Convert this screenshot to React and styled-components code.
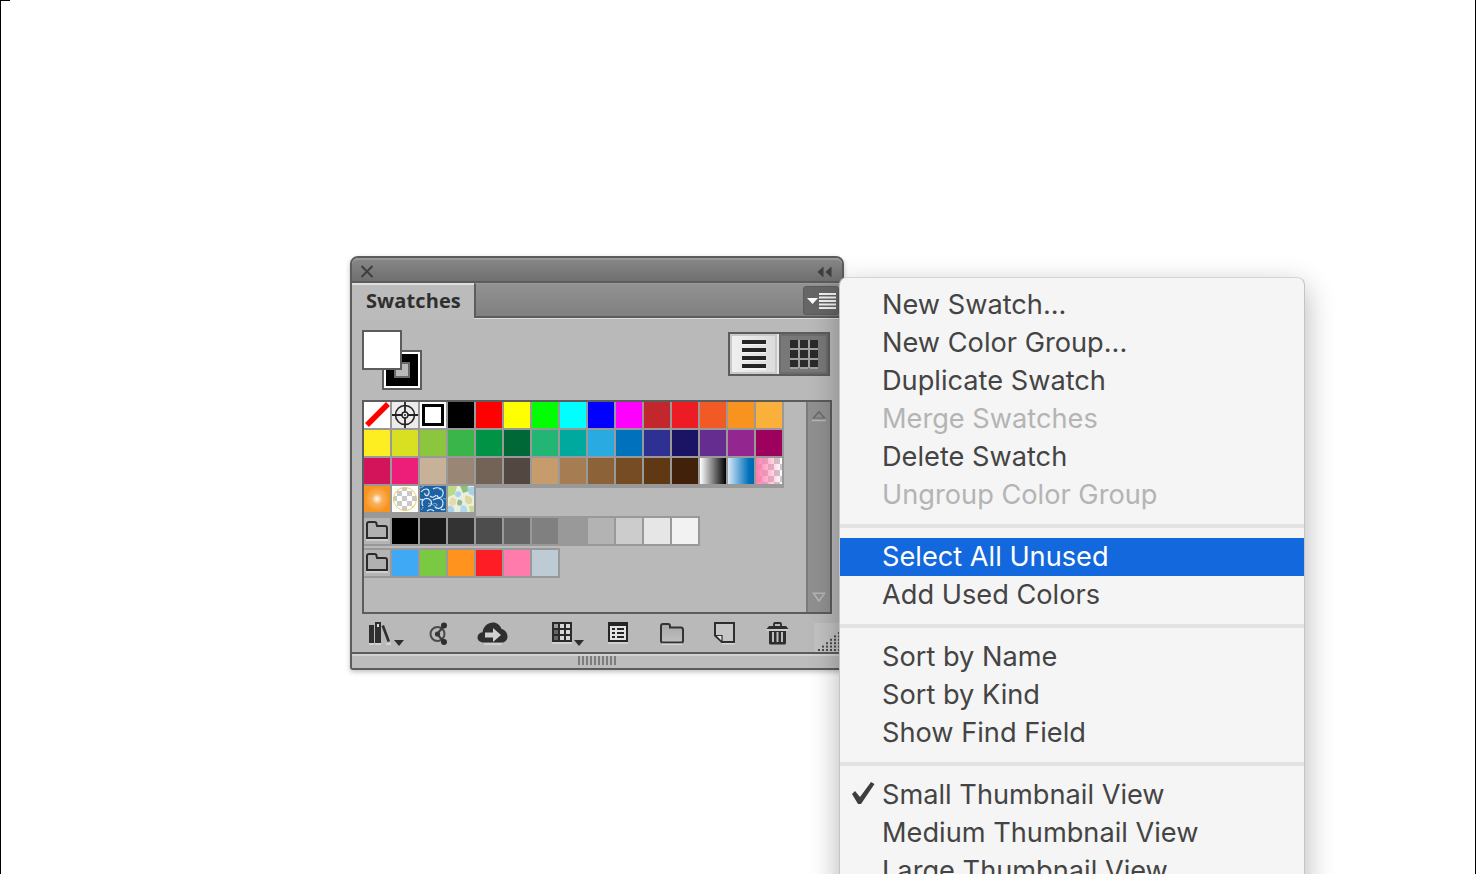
import React from 'react';
import styled, { createGlobalStyle } from 'styled-components';

const GlobalStyle = createGlobalStyle`
  html, body {
    margin: 0;
    padding: 0;
    background: #fff;
    overflow: hidden;
  }
  * {
    box-sizing: border-box;
  }
`;

const Page = styled.div`
  position: relative;
  width: 1476px;
  height: 874px;
  overflow: hidden;
  background: #fff;
  border-left: 1px solid #000;
  border-right: 1px solid #000;
  &::before {
    content: '';
    position: absolute;
    left: 0;
    top: 0;
    width: 9px;
    height: 1px;
    background: #000;
  }
`;

const PanelWindow = styled.div`
  position: absolute;
  left: 349px;
  top: 256px;
  width: 494px;
  height: 414px;
  display: flex;
  flex-direction: column;
  border: 2px solid #5c5c5c;
  border-radius: 8px 8px 3px 3px;
  background: #b9b9b9;
  box-shadow: 0 2px 5px rgba(0, 0, 0, 0.25);
`;

const TitleBar = styled.div`
  height: 25px;
  flex: none;
  display: flex;
  align-items: center;
  justify-content: space-between;
  padding: 2px 10px 0 8px;
  border-radius: 6px 6px 0 0;
  border-top: 2px solid #989898;
  border-bottom: 2px solid #5c5c5c;
  background: linear-gradient(#868686, #6f6f6f);
`;

const TabRow = styled.div`
  height: 36px;
  flex: none;
  display: flex;
  background: linear-gradient(#929292, #7f7f7f);
  border-bottom: 1px solid #ddd;
`;

const Tab = styled.div`
  width: 122px;
  display: flex;
  align-items: center;
  padding: 0 0 2px 14px;
  background: #bbb;
  border-top: 2px solid #dedede;
  font: 700 20px/1 'Open Sans', sans-serif;
  letter-spacing: 0.1px;
  color: #2f2f2f;
  margin-bottom: -1px;
  z-index: 1;
`;

const TabFill = styled.div`
  flex: 1;
  display: flex;
  justify-content: flex-end;
  padding: 2px 3px 0 0;
  border-left: 2px solid #5c5c5c;
  border-top: 1px solid #9b9b9b;
  border-bottom: 2px solid #5c5c5c;
`;

const MenuButton = styled.div`
  width: 36px;
  height: 29px;
  display: flex;
  align-items: center;
  justify-content: center;
  gap: 1px;
  border-radius: 3px;
  background: #666;
  border: 1px solid #5a5a5a;
`;

const PanelBody = styled.div`
  flex: 1;
  display: flex;
  flex-direction: column;
  padding: 11px 9px 0 10px;
  background: #b9b9b9;
`;

const TopControls = styled.div`
  height: 60px;
  width: 468px;
  flex: none;
  display: flex;
  justify-content: space-between;
`;

const ColorPair = styled.div`
  position: relative;
  width: 60px;
  height: 60px;
`;

const FillChip = styled.div`
  position: absolute;
  left: 0;
  top: 0;
  width: 40px;
  height: 40px;
  background: #fff;
  border: 2px solid #5c5c5c;
`;

const StrokeChip = styled.div`
  position: absolute;
  right: 0;
  bottom: 0;
  width: 40px;
  height: 40px;
  padding: 4px;
  background: #000;
  border: 2px solid #5c5c5c;
  box-shadow: inset 0 0 0 2px #fff;
  &::after {
    content: '';
    display: block;
    margin: 6px;
    width: 12px;
    height: 12px;
    box-sizing: content-box;
    border: 2px solid #6a6a6a;
    background: #b9b9b9;
  }
`;

const ViewToggle = styled.div`
  width: 102px;
  height: 44px;
  margin-top: 2px;
  display: flex;
  border: 2px solid #5c5c5c;
  background: #e8e8e8;
`;

const ViewButton = styled.div`
  width: ${(p) => (p.$active ? 48 : 50)}px;
  display: flex;
  align-items: center;
  justify-content: center;
  margin-right: ${(p) => (p.$active ? 2 : 0)}px;
  padding-top: 2px;
  background: ${(p) =>
    p.$active ? 'linear-gradient(90deg,#f0f0f0,#dcdcdc)' : '#787878'};
  border: ${(p) => (p.$active ? '2px solid #c9c9c9' : '2px solid #6c6c6c')};
`;

const ListBox = styled.div`
  height: 214px;
  flex: none;
  margin-top: 10px;
  width: 470px;
  display: flex;
  border: 2px solid #5c5c5c;
  background: #b9b9b9;
`;

const SwatchArea = styled.div`
  flex: 1;
  display: flex;
  flex-direction: column;
  align-items: flex-start;
`;

const SwatchGrid = styled.div`
  display: flex;
  flex-wrap: wrap;
  width: 420px;
  background: linear-gradient(#999, #999) 0 0 / 420px 86px no-repeat,
    linear-gradient(#999, #999) 0 84px / 112px 30px no-repeat;
  height: 114px;
  align-content: flex-start;
`;

const Swatch = styled.div`
  width: 26px;
  height: 26px;
  margin: 0 2px 2px 0;
  flex: none;
  overflow: hidden;
  background: ${(p) => p.$color};
`;

const GroupRow = styled.div`
  display: flex;
  height: 30px;
  padding: 2px 0;
  margin-bottom: 2px;
  background: #999;
`;

const GroupCell = styled(Swatch)`
  margin: 0 2px 0 0;
`;

const FolderCell = styled(GroupCell)`
  background: #b4b4b4;
  display: flex;
  align-items: center;
  justify-content: center;
`;

const Scrollbar = styled.div`
  width: 24px;
  flex: none;
  display: flex;
  flex-direction: column;
  justify-content: space-between;
  align-items: center;
  padding: 8px 0 8px;
  background: #909090;
  border-left: 2px solid #7b7b7b;
`;

const Footer = styled.div`
  height: 38px;
  flex: none;
  display: flex;
  align-items: flex-start;
  padding: 8px 0 0 7px;
  margin-right: -9px;
`;

const Tool = styled.div`
  flex: none;
  display: flex;
  margin-left: ${(p) => p.$gap || 0}px;
`;

const ToolCaret = styled.svg`
  margin: 18px 0 0 2px;
`;

const ResizeGrip = styled.div`
  margin-left: auto;
  margin-top: 1px;
  width: 28px;
  height: 29px;
  background: #c2c2c2;
`;

const BottomBar = styled.div`
  height: 16px;
  flex: none;
  display: flex;
  align-items: center;
  justify-content: center;
  padding: 0 0 2px 2px;
  border-top: 2px solid #5c5c5c;
  background: linear-gradient(#d2d2d2 2px, #bdbdbd 2px);
`;

const Menu = styled.div`
  position: absolute;
  left: 838px;
  top: 277px;
  width: 466px;
  height: 640px;
  padding-top: 8px;
  background: #f5f5f5;
  border-radius: 8px 8px 0 0;
  border: 1px solid #c4c4c4;
  border-top-color: #d4d4d4;
  box-shadow: 0 10px 30px rgba(0, 0, 0, 0.3);
  font-family: Inter, 'Noto Sans', sans-serif;
`;

const MenuItem = styled.div`
  position: relative;
  height: 38px;
  padding: 0 0 0 42px;
  display: flex;
  align-items: center;
  font-size: 27.2px;
  line-height: 36px;
  white-space: nowrap;
  color: ${(p) =>
    p.$active ? '#fff' : p.$disabled ? '#b4b4b4' : '#444'};
  background: ${(p) => (p.$active ? '#1268dc' : 'transparent')};
`;

const MenuSeparator = styled.div`
  height: 4px;
  margin: 10px 0;
  background: #e3e3e3;
`;

const CheckMark = styled.svg`
  position: absolute;
  left: 11px;
  top: 6px;
`;

const FrameMark = styled.div`
  width: 26px;
  height: 26px;
  background: #fff;
  padding: 2px;
  & > div {
    width: 22px;
    height: 22px;
    border: 3px solid #000;
    background: #fff;
  }
`;

const Close = () => (
  <svg width="14" height="13" viewBox="0 0 14 13">
    <path d="M1.5 1 12.5 12M12.5 1 1.5 12" stroke="#3e3e3e" strokeWidth="2" />
  </svg>
);

const Collapse = () => (
  <svg width="15" height="12" viewBox="0 0 15 12">
    <path d="M6.5 0.5V11.5L0.5 6ZM14.5 0.5V11.5L8.5 6Z" fill="#3e3e3e" />
  </svg>
);

const PanelMenuIcon = () => (
  <>
    <svg width="11" height="6" viewBox="0 0 11 6">
      <path d="M0 0H11L5.5 6Z" fill="#fff" />
    </svg>
    <svg width="17" height="16" viewBox="0 0 17 16">
      <path
        d="M0 1H17M0 4.5H17M0 8H17M0 11.5H17M0 15H17"
        stroke="#f2f2f2"
        strokeWidth="2"
      />
    </svg>
  </>
);

const ListIcon = () => (
  <svg width="24" height="30" viewBox="0 0 24 30">
    <path d="M0 0h24v4H0zM0 8h24v4H0zM0 16h24v4H0zM0 24h24v4H0z" fill="#262626" />
    <path d="M0 4h24v1H0zM0 12h24v1H0zM0 20h24v1H0zM0 28h24v2H0z" fill="#fff" opacity=".6" />
  </svg>
);

const GridIcon = () => (
  <svg width="28" height="30" viewBox="0 0 28 30">
    <rect width="28" height="28" fill="#a0a0a0" />
    <path
      d="M0 0h8v8H0zM10 0h8v8h-8zM20 0h8v8h-8zM0 10h8v8H0zM10 10h8v8h-8zM20 10h8v8h-8zM0 20h8v8H0zM10 20h8v8h-8zM20 20h8v8h-8z"
      fill="#2a2a2a"
    />
    <path d="M0 28h8M10 28h8M20 28h8" stroke="#a0a0a0" strokeWidth="2" />
  </svg>
);

const RegistrationMark = () => (
  <svg width="26" height="26" viewBox="0 0 26 26">
    <rect width="26" height="26" fill="#ececec" />
    <circle cx="13" cy="13" r="9.5" fill="none" stroke="#222" strokeWidth="1.6" />
    <path d="M13 0v26M0 13h26" stroke="#222" strokeWidth="1.8" />
    <circle cx="13" cy="13" r="3" fill="#ececec" stroke="#222" strokeWidth="1.4" />
    <circle cx="13" cy="13" r="1" fill="#222" />
  </svg>
);

const NoneMark = () => (
  <svg width="26" height="26" viewBox="0 0 26 26">
    <rect width="26" height="26" fill="#fff" />
    <path d="M3 23 24 2" stroke="#f00" strokeWidth="5.5" />
  </svg>
);

const checker = (a, b, s) =>
  `repeating-conic-gradient(${a} 0 25%, ${b} 0 50%) 0 0 / ${s}px ${s}px`;

const CircleChecker = () => (
  <svg width="26" height="26" viewBox="0 0 26 26">
    <defs>
      <pattern id="chk" width="10" height="10" patternUnits="userSpaceOnUse">
        <rect width="10" height="10" fill="#fff" />
        <rect width="5" height="5" fill="#c8c8c8" />
        <rect x="5" y="5" width="5" height="5" fill="#c8c8c8" />
      </pattern>
    </defs>
    <rect width="26" height="26" fill="#fff" />
    <circle cx="13" cy="13" r="11.5" fill="url(#chk)" stroke="#e8cf55" strokeWidth="1" />
  </svg>
);

const BlueSwirl = () => (
  <svg width="26" height="26" viewBox="0 0 26 26">
    <rect width="26" height="26" fill="#1d62a3" />
    <g fill="none" stroke="#dbe9f4" strokeWidth="1.2">
      <path d="M1 6c4-5 9-3 8 1s-5 3-4 0M13 3c5-3 11 0 10 5s-6 4-6 1" />
      <path d="M3 20c-3-5 2-9 6-7s3 8-1 7M13 14c4-3 10-2 10 3s-5 7-8 4" />
      <path d="M10 10c2 2 5 1 6-1M7 25c2-2 5-2 7 0M21 23c1 1 3 1 4 0M0 13c1 1 2 1 3 0" />
    </g>
    <g fill="none" stroke="#8fbbdc" strokeWidth="1">
      <path d="M12 19c2-2 5-2 5 0s-3 2-3 0M0 2c1-1 3-1 4-2M23 12c1 1 2 1 3 1M1 24c1-1 2-2 2-3M19 3c1 1 2 1 3 0M8 17c1 1 2 1 3 0" />
    </g>
  </svg>
);

const PastelBlobs = () => (
  <svg width="26" height="26" viewBox="0 0 26 26">
    <rect width="26" height="26" fill="#e9efdc" />
    <path d="M0 0h9l-2 8-7 3z" fill="#bcd98a" />
    <path d="M12 0h8l1 5-6 2z" fill="#8fbf7a" />
    <path d="M19 1h7v9l-5-2z" fill="#a5d4ea" />
    <path d="M8 6c3-2 6 0 5 3s-5 3-6 0z" fill="#a9d3ea" />
    <path d="M17 10c4-1 8 2 7 6s-6 2-7-1z" fill="#dfd7a0" />
    <path d="M3 12c4-1 6 2 5 5s-6 4-7 0z" fill="#e3dba8" />
    <path d="M10 14c3-1 5 1 4 4s-5 2-5-1z" fill="#93b79a" />
    <path d="M0 20c4-1 7 1 6 6H0z" fill="#a9d3ea" />
    <path d="M13 20c3-2 7 0 6 6h-7z" fill="#b2d8ec" />
    <path d="M21 20h5v6h-4z" fill="#cbdc9a" />
  </svg>
);

const specials = {
  none: <NoneMark />,
  registration: <RegistrationMark />,
  circle: <CircleChecker />,
  blue: <BlueSwirl />,
  pastel: <PastelBlobs />,
};

const mainSwatches = [
  { kind: 'none' },
  { kind: 'registration' },
  { frame: true },
  '#000000', '#ff0000', '#ffff00', '#00ff00', '#00ffff', '#0000ff', '#ff00ff',
  '#c1272d', '#ed1c24', '#f15a24', '#f7931e', '#fbb03b',
  '#fcee21', '#d9e021', '#8cc63f', '#39b54a', '#009245', '#006837', '#22b573',
  '#00a99d', '#29abe2', '#0071bc', '#2e3192', '#1b1464', '#662d91', '#93278f', '#9e005d',
  '#d4145a', '#ed1e79', '#c7b299', '#998675', '#736357', '#534741', '#c69c6d',
  '#a67c52', '#8c6239', '#754c24', '#603813', '#42210b',
  { color: 'linear-gradient(90deg,#fff,#000)' },
  { color: 'linear-gradient(90deg,#d6e8f7,#0071bc 80%,#0067ac)' },
  { color: `linear-gradient(90deg,#ff7bac,rgba(255,123,172,0)), ${checker('#c9c9c9', '#fff', 12)}` },
  { color: 'radial-gradient(circle,#fff 0,#fbb15a 28%,#f7931e 70%)' },
  { kind: 'circle' },
  { kind: 'blue' },
  { kind: 'pastel' },
];

const grayGroup = ['#000000', '#1a1a1a', '#333333', '#4d4d4d', '#666666', '#808080', '#999999', '#b3b3b3', '#cccccc', '#e6e6e6', '#f2f2f2'];
const brightGroup = ['#3fa9f5', '#7ac943', '#ff931e', '#ff1d25', '#ff7bac', '#bdccd4'];

const FolderIcon = () => (
  <svg width="22" height="20" viewBox="0 0 22 20">
    <path
      d="M1 17V3Q1 1 3 1H8.5Q10.5 1 10.5 3L11 5H19Q21 5 21 7V17Z"
      fill="#b0b0b0"
      stroke="#2b2b2b"
      strokeWidth="2"
    />
    <path d="M0 19h22" stroke="#d6d6d6" strokeWidth="1.6" />
  </svg>
);

const Arrow = ({ down }) => (
  <svg width="16" height="12" viewBox="0 0 16 12">
    {down ? (
      <path d="M1 0.5H15L8 10.5ZM4 2 8 7.5 12 2Z" fill="#b5b5b5" fillRule="evenodd" />
    ) : (
      <>
        <path d="M8 0.5 15 8.5H1ZM8 3 4 7.5H12Z" fill="#6b6b6b" fillRule="evenodd" />
        <path d="M1 10.5H15" stroke="#b5b5b5" strokeWidth="1.5" />
      </>
    )}
  </svg>
);

const Caret = () => (
  <ToolCaret width="10" height="6" viewBox="0 0 10 6">
    <path d="M0 0H10L5 6Z" fill="#2e2e2e" />
  </ToolCaret>
);

const LibraryIcon = () => (
  <svg width="23" height="23" viewBox="0 0 23 23">
    <path d="M0 3h5v18H0zM6 0h6v21H6z" fill="#2f2f2f" />
    <path d="M8 2h2v3H8z" fill="#ddd" />
    <path d="M12.5 4 18.5 20 21 19 15 3Z" fill="#2f2f2f" />
    <path d="M0 22h5M6 22h6M17 22h5" stroke="#dadada" strokeWidth="1.4" />
  </svg>
);

const LinkIcon = () => (
  <svg width="20" height="24" viewBox="0 0 20 24">
    <circle cx="8.5" cy="12" r="7" fill="none" stroke="#4a4a4a" strokeWidth="2" />
    <circle cx="8.5" cy="12" r="2.6" fill="#333" />
    <path d="M8 12 15 4M8 12 15 20" stroke="#3a3a3a" strokeWidth="2" />
    <circle cx="15" cy="3.5" r="3" fill="#2e2e2e" />
    <circle cx="15" cy="20" r="3" fill="#2e2e2e" />
  </svg>
);

const CloudIcon = () => (
  <svg width="31" height="23" viewBox="0 0 31 23">
    <path
      d="M7 20.5C2.5 20.5 0.5 18 0.5 15.5C0.5 12.5 2.5 10.5 5.5 10.2C6.5 4 11 0.5 16 0.5C20 0.5 23 3 24.5 7C28 7.5 30.5 11 30.5 14.5C30.5 18 28 20.5 25 20.5Z"
      fill="#2f2f2f"
    />
    <path d="M8 10.5h8V6l8 7-8 7v-4.5H8z" fill="#d0d0d0" />
    <path d="M7 22h18" stroke="#d8d8d8" strokeWidth="1.4" />
  </svg>
);

const SwatchGridIcon = () => (
  <svg width="20" height="22" viewBox="0 0 20 22">
    <rect width="20" height="20" fill="#2a2a2a" />
    <path d="M8 2h4v4H8zM14 2h4v4h-4zM8 8h4v4H8zM14 8h4v4h-4zM14 14h4v4h-4zM8 14h4v4H8z" fill="#d8d8d8" />
    <path d="M2 2h4v4H2z" fill="#9a9a9a" />
    <path d="M2 8h4v4H2zM2 14h4v4H2z" fill="#666" />
    <path d="M0 21h20" stroke="#dadada" strokeWidth="1.4" />
  </svg>
);

const GroupIcon = () => (
  <svg width="20" height="22" viewBox="0 0 20 22">
    <rect width="20" height="20" fill="#262626" />
    <path d="M2 4h16v14H2z" fill="#e4e4e4" />
    <path d="M4 6h3v2H4zM9 6h7v2H9zM4 10h3v2H4zM9 10h7v2H9zM4 14h3v2H4zM9 14h7v2H9z" fill="#262626" />
    <path d="M0 21h20" stroke="#dadada" strokeWidth="1.4" />
  </svg>
);

const NewFolderIcon = () => (
  <svg width="24" height="23" viewBox="0 0 24 23">
    <defs>
      <linearGradient id="folderFill" x1="0" y1="0" x2="0" y2="1">
        <stop offset="0" stopColor="#a8a8a8" />
        <stop offset="1" stopColor="#c0c0c0" />
      </linearGradient>
    </defs>
    <path
      d="M1 19V4Q1 2 3 2H8Q10 2 10 4V5.5H21Q23 5.5 23 8V19Q23 20.5 21 20.5H3Q1 20.5 1 19Z"
      fill="url(#folderFill)"
      stroke="#333"
      strokeWidth="2"
    />
    <path d="M2 22.3h20" stroke="#d8d8d8" strokeWidth="1.4" />
  </svg>
);

const NewSwatchIcon = () => (
  <svg width="21" height="23" viewBox="0 0 21 23">
    <path d="M1 1H20V20H8L1 13.5Z" fill="#c6c6c6" stroke="#2e2e2e" strokeWidth="2" />
    <path d="M1.5 13.5H8V20Z" fill="#ececec" stroke="#2e2e2e" strokeWidth="1.2" />
    <path d="M8 21.7h13" stroke="#dadada" strokeWidth="1.3" />
  </svg>
);

const TrashIcon = () => (
  <svg width="23" height="24" viewBox="0 0 23 24">
    <path d="M8 4V2Q8 1 9 1H14Q15 1 15 2V4" fill="none" stroke="#2e2e2e" strokeWidth="1.8" />
    <path d="M0.5 7 3 4H20L22.5 7Z" fill="#2e2e2e" />
    <path d="M3 9H20V21Q20 22.5 18.5 22.5H4.5Q3 22.5 3 21Z" fill="#2e2e2e" />
    <path d="M6 10h2v10H6zM10.5 10h2v10h-2zM15 10h2v10h-2z" fill="#bdbdbd" />
    <path d="M0.5 8h22" stroke="#d8d8d8" strokeWidth="1.2" />
  </svg>
);

const GripDots = () => (
  <svg width="28" height="29" viewBox="0 0 28 29">
    <g fill="#4a4a4a">
      {[...Array(6)].map((_, row) =>
        [...Array(row + 1)].map((_, col) => (
          <rect key={`${row}-${col}`} x={24 - col * 4} y={9 + row * 3.4} width="2" height="2" />
        ))
      )}
    </g>
  </svg>
);

const GripLines = () => (
  <svg width="40" height="9" viewBox="0 0 40 9">
    <path
      d="M1 0v9M5 0v9M9 0v9M13 0v9M17 0v9M21 0v9M25 0v9M29 0v9M33 0v9M37 0v9"
      stroke="#7d7d7d"
      strokeWidth="2"
    />
  </svg>
);

const menuItems = [
  { label: 'New Swatch...' },
  { label: 'New Color Group...' },
  { label: 'Duplicate Swatch' },
  { label: 'Merge Swatches', disabled: true },
  { label: 'Delete Swatch' },
  { label: 'Ungroup Color Group', disabled: true },
  { separator: true },
  { label: 'Select All Unused', active: true },
  { label: 'Add Used Colors' },
  { separator: true },
  { label: 'Sort by Name' },
  { label: 'Sort by Kind' },
  { label: 'Show Find Field' },
  { separator: true },
  { label: 'Small Thumbnail View', checked: true },
  { label: 'Medium Thumbnail View' },
  { label: 'Large Thumbnail View' },
];

function renderSwatch(item, i) {
  if (typeof item === 'string') return <Swatch key={i} $color={item} />;
  if (item.frame) {
    return (
      <Swatch key={i}>
        <FrameMark>
          <div />
        </FrameMark>
      </Swatch>
    );
  }
  if (item.kind) return <Swatch key={i}>{specials[item.kind]}</Swatch>;
  return <Swatch key={i} $color={item.color} />;
}

export default function App() {
  return (
    <Page>
      <GlobalStyle />
      <PanelWindow>
        <TitleBar>
          <Close />
          <Collapse />
        </TitleBar>
        <TabRow>
          <Tab>Swatches</Tab>
          <TabFill>
            <MenuButton>
              <PanelMenuIcon />
            </MenuButton>
          </TabFill>
        </TabRow>
        <PanelBody>
          <TopControls>
            <ColorPair>
              <StrokeChip />
              <FillChip />
            </ColorPair>
            <ViewToggle>
              <ViewButton $active>
                <ListIcon />
              </ViewButton>
              <ViewButton>
                <GridIcon />
              </ViewButton>
            </ViewToggle>
          </TopControls>
          <ListBox>
            <SwatchArea>
              <SwatchGrid>{mainSwatches.map(renderSwatch)}</SwatchGrid>
              <GroupRow>
                <FolderCell>
                  <FolderIcon />
                </FolderCell>
                {grayGroup.map((c) => (
                  <GroupCell key={c} $color={c} />
                ))}
              </GroupRow>
              <GroupRow>
                <FolderCell>
                  <FolderIcon />
                </FolderCell>
                {brightGroup.map((c) => (
                  <GroupCell key={c} $color={c} />
                ))}
              </GroupRow>
            </SwatchArea>
            <Scrollbar>
              <Arrow />
              <Arrow down />
            </Scrollbar>
          </ListBox>
          <Footer>
            <Tool>
              <LibraryIcon />
              <Caret />
            </Tool>
            <Tool $gap={25}>
              <LinkIcon />
            </Tool>
            <Tool $gap={28}>
              <CloudIcon />
            </Tool>
            <Tool $gap={44}>
              <SwatchGridIcon />
              <Caret />
            </Tool>
            <Tool $gap={24}>
              <GroupIcon />
            </Tool>
            <Tool $gap={32}>
              <NewFolderIcon />
            </Tool>
            <Tool $gap={30}>
              <NewSwatchIcon />
            </Tool>
            <Tool $gap={31}>
              <TrashIcon />
            </Tool>
            <ResizeGrip>
              <GripDots />
            </ResizeGrip>
          </Footer>
        </PanelBody>
        <BottomBar>
          <GripLines />
        </BottomBar>
      </PanelWindow>
      <Menu>
        {menuItems.map((item, i) =>
          item.separator ? (
            <MenuSeparator key={i} />
          ) : (
            <MenuItem key={i} $active={item.active} $disabled={item.disabled}>
              {item.checked && (
                <CheckMark width="24" height="24" viewBox="0 0 24 24">
                  <path d="M1 12 4 9 9 15 20 0 23.5 2 10 22 7 22Z" fill="#3e3e3e" />
                </CheckMark>
              )}
              {item.label}
            </MenuItem>
          )
        )}
      </Menu>
    </Page>
  );
}
